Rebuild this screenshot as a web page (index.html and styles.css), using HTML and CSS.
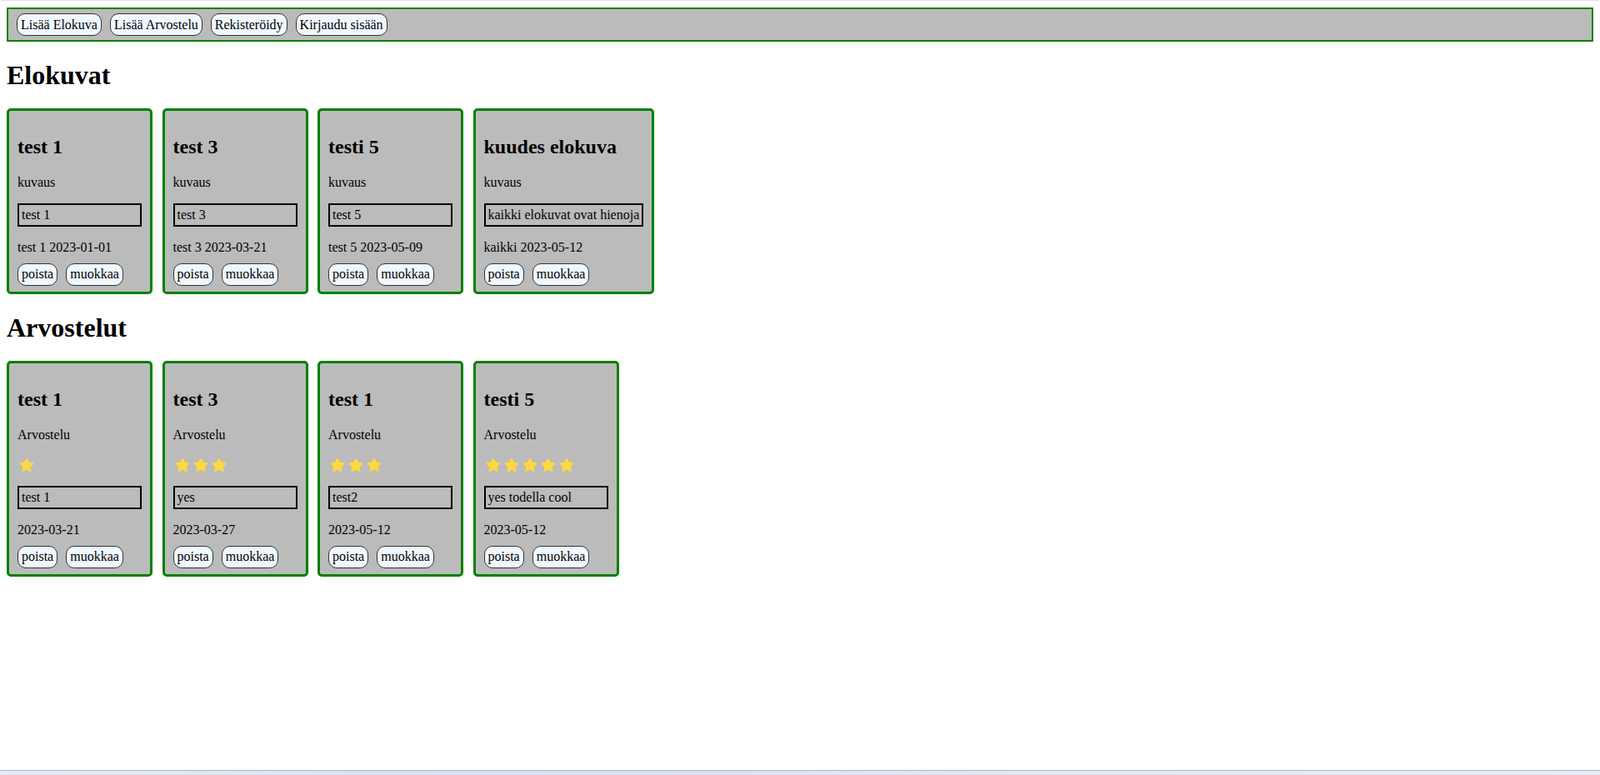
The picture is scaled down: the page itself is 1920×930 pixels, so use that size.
FILE: index.html
```html
<!DOCTYPE html>
<html lang="fi">
<head>
<meta charset="utf-8">
<title>Elokuvat</title>
<link rel="stylesheet" href="styles.css">
</head>
<body>
<nav class="nav">
  <button class="btn">Lisää Elokuva</button>
  <button class="btn">Lisää Arvostelu</button>
  <button class="btn">Rekisteröidy</button>
  <button class="btn">Kirjaudu sisään</button>
</nav>

<h1 class="section-title">Elokuvat</h1>
<div class="card-row">
  <div class="card">
    <h2 class="card-title">test 1</h2>
    <p class="card-text">kuvaus</p>
    <div class="card-box">test 1</div>
    <p class="card-meta">test 1 2023-01-01</p>
    <div class="card-actions"><button class="btn">poista</button><button class="btn">muokkaa</button></div>
  </div>
  <div class="card">
    <h2 class="card-title">test 3</h2>
    <p class="card-text">kuvaus</p>
    <div class="card-box">test 3</div>
    <p class="card-meta">test 3 2023-03-21</p>
    <div class="card-actions"><button class="btn">poista</button><button class="btn">muokkaa</button></div>
  </div>
  <div class="card">
    <h2 class="card-title">testi 5</h2>
    <p class="card-text">kuvaus</p>
    <div class="card-box">test 5</div>
    <p class="card-meta">test 5 2023-05-09</p>
    <div class="card-actions"><button class="btn">poista</button><button class="btn">muokkaa</button></div>
  </div>
  <div class="card">
    <h2 class="card-title">kuudes elokuva</h2>
    <p class="card-text">kuvaus</p>
    <div class="card-box">kaikki elokuvat ovat hienoja</div>
    <p class="card-meta">kaikki 2023-05-12</p>
    <div class="card-actions"><button class="btn">poista</button><button class="btn">muokkaa</button></div>
  </div>
</div>

<h1 class="section-title">Arvostelut</h1>
<div class="card-row">
  <div class="card">
    <h2 class="card-title">test 1</h2>
    <p class="card-text">Arvostelu</p>
    <div class="stars">
      <svg class="star" viewBox="0 0 576 512"><path d="M259.3 17.8L194 150.2 47.9 171.5c-26.2 3.8-36.7 36.1-17.7 54.6l105.7 103-25 145.5c-4.5 26.3 23.2 46 46.4 33.7L288 439.6l130.7 68.7c23.2 12.2 50.9-7.4 46.4-33.7l-25-145.5 105.7-103c19-18.5 8.5-50.8-17.7-54.6L382 150.2 316.7 17.8c-11.7-23.6-45.6-23.9-57.4 0z"/></svg>
    </div>
    <div class="card-box">test 1</div>
    <p class="card-meta">2023-03-21</p>
    <div class="card-actions"><button class="btn">poista</button><button class="btn">muokkaa</button></div>
  </div>
  <div class="card">
    <h2 class="card-title">test 3</h2>
    <p class="card-text">Arvostelu</p>
    <div class="stars">
      <svg class="star" viewBox="0 0 576 512"><path d="M259.3 17.8L194 150.2 47.9 171.5c-26.2 3.8-36.7 36.1-17.7 54.6l105.7 103-25 145.5c-4.5 26.3 23.2 46 46.4 33.7L288 439.6l130.7 68.7c23.2 12.2 50.9-7.4 46.4-33.7l-25-145.5 105.7-103c19-18.5 8.5-50.8-17.7-54.6L382 150.2 316.7 17.8c-11.7-23.6-45.6-23.9-57.4 0z"/></svg>
      <svg class="star" viewBox="0 0 576 512"><path d="M259.3 17.8L194 150.2 47.9 171.5c-26.2 3.8-36.7 36.1-17.7 54.6l105.7 103-25 145.5c-4.5 26.3 23.2 46 46.4 33.7L288 439.6l130.7 68.7c23.2 12.2 50.9-7.4 46.4-33.7l-25-145.5 105.7-103c19-18.5 8.5-50.8-17.7-54.6L382 150.2 316.7 17.8c-11.7-23.6-45.6-23.9-57.4 0z"/></svg>
      <svg class="star" viewBox="0 0 576 512"><path d="M259.3 17.8L194 150.2 47.9 171.5c-26.2 3.8-36.7 36.1-17.7 54.6l105.7 103-25 145.5c-4.5 26.3 23.2 46 46.4 33.7L288 439.6l130.7 68.7c23.2 12.2 50.9-7.4 46.4-33.7l-25-145.5 105.7-103c19-18.5 8.5-50.8-17.7-54.6L382 150.2 316.7 17.8c-11.7-23.6-45.6-23.9-57.4 0z"/></svg>
    </div>
    <div class="card-box">yes</div>
    <p class="card-meta">2023-03-27</p>
    <div class="card-actions"><button class="btn">poista</button><button class="btn">muokkaa</button></div>
  </div>
  <div class="card">
    <h2 class="card-title">test 1</h2>
    <p class="card-text">Arvostelu</p>
    <div class="stars">
      <svg class="star" viewBox="0 0 576 512"><path d="M259.3 17.8L194 150.2 47.9 171.5c-26.2 3.8-36.7 36.1-17.7 54.6l105.7 103-25 145.5c-4.5 26.3 23.2 46 46.4 33.7L288 439.6l130.7 68.7c23.2 12.2 50.9-7.4 46.4-33.7l-25-145.5 105.7-103c19-18.5 8.5-50.8-17.7-54.6L382 150.2 316.7 17.8c-11.7-23.6-45.6-23.9-57.4 0z"/></svg>
      <svg class="star" viewBox="0 0 576 512"><path d="M259.3 17.8L194 150.2 47.9 171.5c-26.2 3.8-36.7 36.1-17.7 54.6l105.7 103-25 145.5c-4.5 26.3 23.2 46 46.4 33.7L288 439.6l130.7 68.7c23.2 12.2 50.9-7.4 46.4-33.7l-25-145.5 105.7-103c19-18.5 8.5-50.8-17.7-54.6L382 150.2 316.7 17.8c-11.7-23.6-45.6-23.9-57.4 0z"/></svg>
      <svg class="star" viewBox="0 0 576 512"><path d="M259.3 17.8L194 150.2 47.9 171.5c-26.2 3.8-36.7 36.1-17.7 54.6l105.7 103-25 145.5c-4.5 26.3 23.2 46 46.4 33.7L288 439.6l130.7 68.7c23.2 12.2 50.9-7.4 46.4-33.7l-25-145.5 105.7-103c19-18.5 8.5-50.8-17.7-54.6L382 150.2 316.7 17.8c-11.7-23.6-45.6-23.9-57.4 0z"/></svg>
    </div>
    <div class="card-box">test2</div>
    <p class="card-meta">2023-05-12</p>
    <div class="card-actions"><button class="btn">poista</button><button class="btn">muokkaa</button></div>
  </div>
  <div class="card">
    <h2 class="card-title">testi 5</h2>
    <p class="card-text">Arvostelu</p>
    <div class="stars">
      <svg class="star" viewBox="0 0 576 512"><path d="M259.3 17.8L194 150.2 47.9 171.5c-26.2 3.8-36.7 36.1-17.7 54.6l105.7 103-25 145.5c-4.5 26.3 23.2 46 46.4 33.7L288 439.6l130.7 68.7c23.2 12.2 50.9-7.4 46.4-33.7l-25-145.5 105.7-103c19-18.5 8.5-50.8-17.7-54.6L382 150.2 316.7 17.8c-11.7-23.6-45.6-23.9-57.4 0z"/></svg>
      <svg class="star" viewBox="0 0 576 512"><path d="M259.3 17.8L194 150.2 47.9 171.5c-26.2 3.8-36.7 36.1-17.7 54.6l105.7 103-25 145.5c-4.5 26.3 23.2 46 46.4 33.7L288 439.6l130.7 68.7c23.2 12.2 50.9-7.4 46.4-33.7l-25-145.5 105.7-103c19-18.5 8.5-50.8-17.7-54.6L382 150.2 316.7 17.8c-11.7-23.6-45.6-23.9-57.4 0z"/></svg>
      <svg class="star" viewBox="0 0 576 512"><path d="M259.3 17.8L194 150.2 47.9 171.5c-26.2 3.8-36.7 36.1-17.7 54.6l105.7 103-25 145.5c-4.5 26.3 23.2 46 46.4 33.7L288 439.6l130.7 68.7c23.2 12.2 50.9-7.4 46.4-33.7l-25-145.5 105.7-103c19-18.5 8.5-50.8-17.7-54.6L382 150.2 316.7 17.8c-11.7-23.6-45.6-23.9-57.4 0z"/></svg>
      <svg class="star" viewBox="0 0 576 512"><path d="M259.3 17.8L194 150.2 47.9 171.5c-26.2 3.8-36.7 36.1-17.7 54.6l105.7 103-25 145.5c-4.5 26.3 23.2 46 46.4 33.7L288 439.6l130.7 68.7c23.2 12.2 50.9-7.4 46.4-33.7l-25-145.5 105.7-103c19-18.5 8.5-50.8-17.7-54.6L382 150.2 316.7 17.8c-11.7-23.6-45.6-23.9-57.4 0z"/></svg>
      <svg class="star" viewBox="0 0 576 512"><path d="M259.3 17.8L194 150.2 47.9 171.5c-26.2 3.8-36.7 36.1-17.7 54.6l105.7 103-25 145.5c-4.5 26.3 23.2 46 46.4 33.7L288 439.6l130.7 68.7c23.2 12.2 50.9-7.4 46.4-33.7l-25-145.5 105.7-103c19-18.5 8.5-50.8-17.7-54.6L382 150.2 316.7 17.8c-11.7-23.6-45.6-23.9-57.4 0z"/></svg>
    </div>
    <div class="card-box">yes todella cool</div>
    <p class="card-meta">2023-05-12</p>
    <div class="card-actions"><button class="btn">poista</button><button class="btn">muokkaa</button></div>
  </div>
</div>

<div class="taskbar"></div>
</body>
</html>
```

FILE: styles.css
```css
html {
  border-top: 1px solid #e3e3e3;
  background: #ffffff;
}

body {
  margin: 8px;
  font-family: "Liberation Serif", "Times New Roman", serif;
  font-size: 16px;
  color: #000000;
}

.nav {
  display: flex;
  gap: 10px;
  padding: 5px 10px;
  background: #bbbbbb;
  border: 2px solid #008000;
}

.btn {
  font-family: "Liberation Serif", "Times New Roman", serif;
  font-size: 16px;
  line-height: normal;
  color: #000000;
  background: #f0f8ff;
  border: 1px solid #333333;
  border-radius: 10px;
  padding: 3.5px 4px;
  margin: 0;
}

.section-title {
  font-size: 32px;
  font-weight: bold;
  margin: 22px 0 21px 0;
}

.card-row {
  display: flex;
  gap: 11.5px;
  align-items: flex-start;
}

.card {
  background: #bbbbbb;
  border: 3px solid #008000;
  border-radius: 5px;
  padding: 10px 10px 7px 10px;
}

.card-title {
  font-size: 24px;
  font-weight: bold;
  margin: 19.92px 0;
}

.card-text {
  margin: 16px 0;
}

.card-box {
  box-sizing: border-box;
  min-width: 149px;
  border: 2px solid #000000;
  padding: 3px 3px;
  margin: 16px 0;
  white-space: nowrap;
}

.card-meta {
  margin: 16px 0 0 0;
}

.card-actions {
  display: flex;
  gap: 10px;
  margin-top: 10px;
}

.stars {
  display: flex;
  align-items: flex-end;
  gap: 4px;
  height: 20px;
  padding-left: 2px;
  margin: 16px 0;
}

.star {
  width: 18px;
  height: 16px;
  fill: #fdd83f;
  margin-bottom: 1px;
}

.taskbar {
  position: fixed;
  left: 0;
  right: 0;
  bottom: 0;
  height: 5px;
  border-top: 1px solid #aab3bf;
  background: linear-gradient(90deg, #e2ecf6, #d6e2f6 30%, #dfe6f6 60%, #e6eefa);
}
```
